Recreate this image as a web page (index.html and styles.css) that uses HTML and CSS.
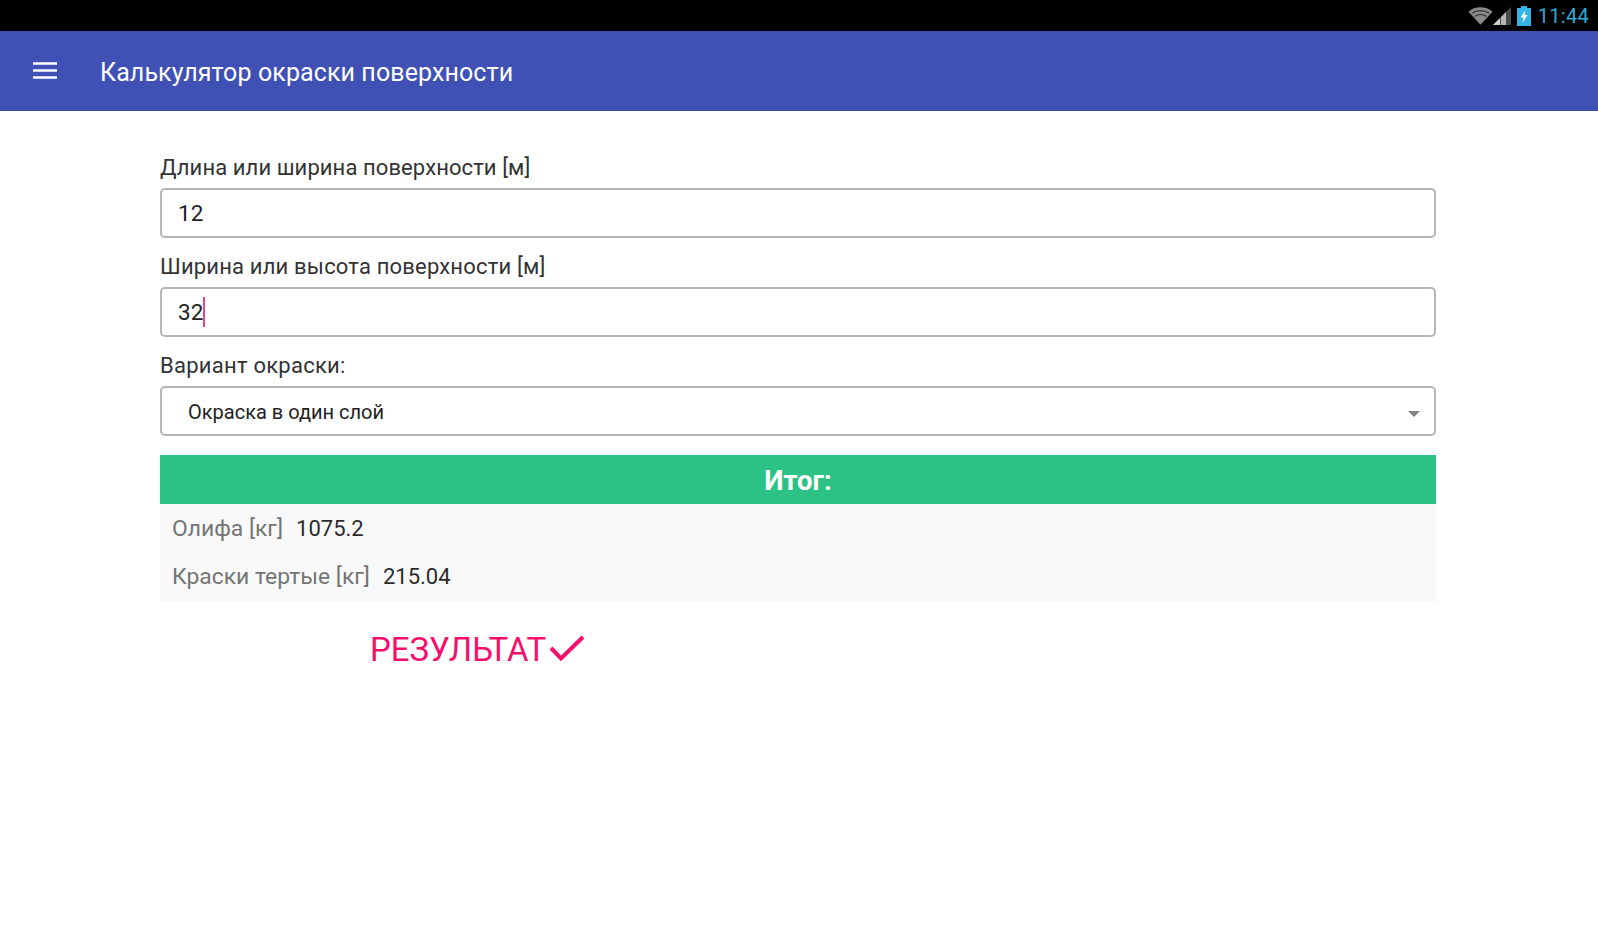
FILE: index.html
```html
<!DOCTYPE html>
<html lang="ru">
<head>
<meta charset="utf-8">
<title>Калькулятор окраски поверхности</title>
<link rel="stylesheet" href="styles.css">
</head>
<body>
<div class="status">
  <svg class="st-wifi" width="25" height="20" viewBox="0 0 26 20"><path d="M13 19 L0.5 5.5 C7 -0.5 19 -0.5 25.5 5.5 Z" fill="#8a8a8a"/><path d="M4 7.2 C9 3.6 17 3.6 22 7.2 M7 10.4 C10.5 8 15.5 8 19 10.4" stroke="#000" stroke-width="1.3" fill="none" opacity=".65"/></svg>
  <svg class="st-signal" width="19" height="20" viewBox="0 0 19 20"><path d="M18 1 V19 H0 Z" fill="#4a4a4a"/><path d="M7 12 V19 H0 Z" fill="#d0d0d0"/><path d="M8 11 L13 6 V19 H8 Z" fill="#b5b5b5"/></svg>
  <svg class="st-batt" width="14" height="20" viewBox="0 0 14 20"><path d="M4 0 H10 V2 H14 V20 H0 V2 H4 Z" fill="#33b5e5"/><path d="M8.5 4 L3.5 11.5 H6.5 L5.5 17 L10.5 9 H7.5 Z" fill="#fff"/></svg>
  <span class="st-time">11:44</span>
</div>
<header class="appbar">
  <svg class="menu" width="24" height="18" viewBox="0 0 24 18"><path d="M0 1.5 H24 M0 8.5 H24 M0 15.5 H24" stroke="#fff" stroke-width="2.4"/></svg>
  <h1 class="title">Калькулятор окраски поверхности</h1>
</header>
<main class="content">
  <label class="label label-first">Длина или ширина поверхности [м]</label>
  <div class="box"><span class="value">12</span></div>
  <label class="label">Ширина или высота поверхности [м]</label>
  <div class="box"><span class="value">32</span><span class="caret"></span></div>
  <label class="label label-short">Вариант окраски:</label>
  <div class="box select"><span class="option">Окраска в один слой</span><span class="arrow"></span></div>
  <div class="result-head">Итог:</div>
  <div class="result">
    <div class="row"><span class="key">Олифа [кг]</span><span class="num">1075.2</span></div>
    <div class="row"><span class="key">Краски тертые [кг]</span><span class="num">215.04</span></div>
  </div>
  <div class="action">
    <span class="action-text">РЕЗУЛЬТАТ</span>
    <svg class="check" width="36" height="28" viewBox="0 0 36 28"><path d="M2 14 L12 24.5 L34 3" fill="none" stroke="#f50f6b" stroke-width="4"/></svg>
  </div>
</main>
</body>
</html>
```
FILE: styles.css
```css
* { box-sizing: border-box; }
html, body { margin: 0; height: 100%; }
body { background: #fff; font-family: Roboto, "Noto Sans", sans-serif; overflow: hidden; }
.status { height: 31px; background: #000; display: flex; align-items: center; justify-content: flex-end; padding-right: 9px; }
.st-signal { margin-right: 5px; }
.st-batt { margin-right: 7px; }
.st-time { color: #31aad6; font-size: 20px; letter-spacing: .3px; }
.appbar { height: 80px; background: #3f51b5; display: flex; align-items: center; padding: 0 0 0 33px; }
.menu { flex: none; }
.title { margin: 3px 0 0 43px; color: #fff; font-weight: 400; font-size: 25px; letter-spacing: .1px; }
.content { padding: 0 162px 0 160px; }
.label { display: block; height: 25px; margin-top: 16px; font-size: 22px; letter-spacing: .18px; line-height: 25px; color: #333; }
.label-first { margin-top: 44px; letter-spacing: .09px; }
.label-short { letter-spacing: .25px; }
.box { height: 50px; margin-top: 8px; border: 2px solid #b5b5b5; border-radius: 5px; display: flex; align-items: center; padding-left: 16px; position: relative; }
.value { font-size: 22.5px; color: #222; }
.caret { width: 2px; height: 30px; background: #e0468f; }
.select { padding: 1px 0 0 26px; }
.option { font-size: 20px; color: #222; }
.arrow { position: absolute; right: 14px; top: 23px; border-style: solid; border-width: 6px 6.5px 0; border-color: #808080 transparent transparent; }
.result-head { height: 49px; margin-top: 19px; background: #2cc185; color: #fff; font-size: 27.5px; font-weight: 700; text-align: center; line-height: 51px; }
.result { height: 98px; background: #f9f9f9; padding-left: 12px; }
.row { height: 48px; display: flex; align-items: center; gap: 13px; font-size: 22px; }
.key { color: #757575; font-size: 22.9px; }
.num { color: #2b2b2b; }
.action { display: flex; align-items: center; margin: 28px 0 0 210px; }
.action-text { font-size: 33px; color: #f50f6b; }
.check { margin-left: 3px; margin-top: -4px; }
```
